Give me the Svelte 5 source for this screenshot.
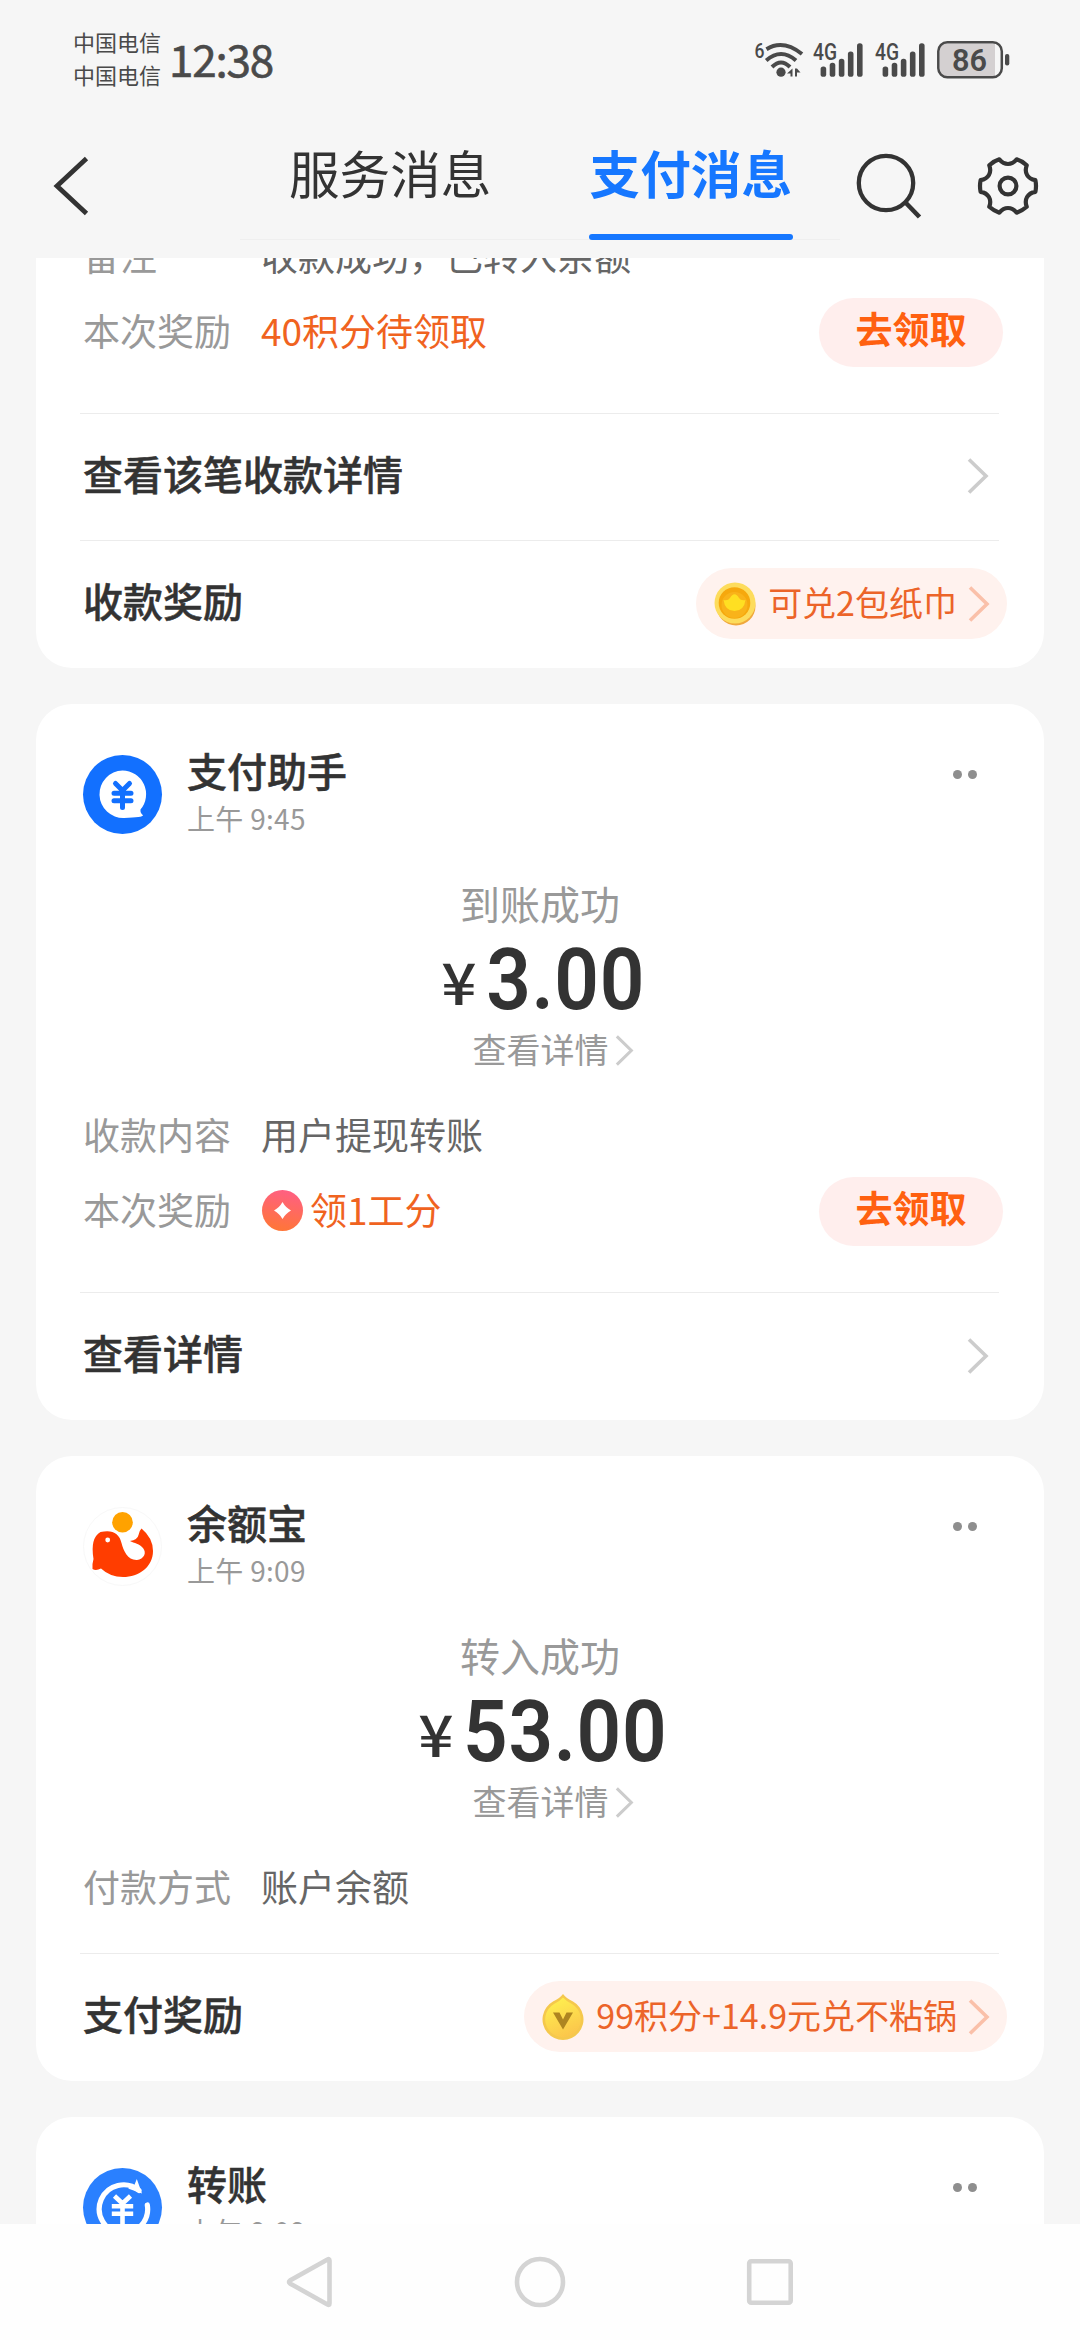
<script>
  const cards = [
    {
      rows: [
        { label: '备注', value: '收款成功，已转入余额' },
        { label: '本次奖励', value: '40积分待领取', reward: true, action: '去领取' }
      ],
      links: [
        { text: '查看该笔收款详情' },
        { text: '收款奖励', pill: '可兑2包纸巾', icon: 'coin' }
      ]
    },
    {
      avatar: 'assistant',
      name: '支付助手',
      time: '上午 9:45',
      status: '到账成功',
      amount: '3.00',
      rows: [
        { label: '收款内容', value: '用户提现转账' },
        { label: '本次奖励', value: '领1工分', reward: true, icon: true, action: '去领取' }
      ],
      links: [{ text: '查看详情' }]
    },
    {
      avatar: 'whale',
      name: '余额宝',
      time: '上午 9:09',
      status: '转入成功',
      amount: '53.00',
      rows: [{ label: '付款方式', value: '账户余额' }],
      links: [{ text: '支付奖励', pill: '99积分+14.9元兑不粘锅', icon: 'drop' }]
    },
    { avatar: 'transfer', name: '转账', time: '上午 9:09', rows: [], links: [] }
  ];

  const bars = [10.3, 14, 18, 25.3, 33.6];

  // Six rounded teeth joined by concave notches.
  function gearPath(c, outer, inner) {
    const pt = (deg, r) => {
      const a = (deg * Math.PI) / 180;
      return `${(c + r * Math.cos(a)).toFixed(2)} ${(c + r * Math.sin(a)).toFixed(2)}`;
    };
    let d = `M${pt(-12, outer)}`;
    for (let k = 0; k < 6; k++) {
      const base = k * 60;
      d += `A${outer} ${outer} 0 0 1 ${pt(base + 12, outer)}`;
      d += `C${pt(base + 20, inner)} ${pt(base + 40, inner)} ${pt(base + 48, outer)}`;
    }
    return d + 'Z';
  }
  const gear = gearPath(32, 28, 20.8);
</script>

{#snippet chevron(cls)}
  <svg class={cls} viewBox="0 0 20 36" preserveAspectRatio="none">
    <path d="M1 1.5 L18 18 L1 34.5" fill="none" stroke="currentColor" stroke-width="3.6" />
  </svg>
{/snippet}

{#snippet signal()}
  <svg class="signal" viewBox="0 0 50 38">
    <text x="0" y="19" font-size="23" textLength="24" lengthAdjust="spacingAndGlyphs">4G</text>
    {#each bars as h, i}
      <rect x={7.6 + i * 9.1} y={35.8 - h} width="5.6" height={h} rx="2.6" />
    {/each}
  </svg>
{/snippet}

<div class="screen">
  <div class="status">
    <div class="carrier"><span>中国电信</span><span>中国电信</span></div>
    <div class="clock">12:38</div>
    <div class="icons">
      <svg class="wifi" viewBox="0 0 50 38">
        <text x="0.5" y="16.5" font-size="21" textLength="10" lengthAdjust="spacingAndGlyphs">6</text>
        <g fill="none" stroke="#4a4a4a" stroke-width="4">
          <path d="M12.5 8.2 Q29 -2 48 13" />
          <path d="M12.2 19.5 Q27 6.500 42 19.500" />
          <path d="M18 26 Q27 17 36 26" />
        </g>
        <circle cx="27" cy="31.2" r="4.6" />
        <path d="M38.5 27.500V35.500H36.500V32.500H33ZM41 27.500H43L46.500 31.500H43V35.500H41Z" />
      </svg>
      {@render signal()}
      {@render signal()}
      <svg class="battery" viewBox="0 0 74 38">
        <path d="M9 2.5H58V35.5H9Q2.500 35.5 2.500 28V10Q2.500 2.500 9 2.500Z" fill="#d4d0d1" />
        <rect x="1.300" y="1.300" width="63.500" height="35" rx="9" fill="none" stroke="#4a4a4a" stroke-width="2.500" />
        <rect x="68" y="13" width="4.300" height="11.500" rx="2" />
        <text x="15" y="30" font-size="31" font-weight="600" textLength="35" lengthAdjust="spacingAndGlyphs">86</text>
      </svg>
    </div>
  </div>

  <header>
    <svg class="back" viewBox="0 0 36 58">
      <path d="M33.500 1.500 L4 29 L33.500 56.500" fill="none" stroke="#333" stroke-width="4.800" />
    </svg>
    <nav class="tabs">
      <span class="tab">服务消息</span>
      <span class="tab active">支付消息</span>
    </nav>
    <svg class="search" viewBox="0 0 66 70">
      <circle cx="31" cy="31" r="27.200" fill="none" stroke="#333" stroke-width="4.300" />
      <path d="M50.500 50.500 L64.500 65" stroke="#333" stroke-width="4.600" />
    </svg>
    <svg class="gear" viewBox="0 0 64 64">
      <path d={gear} fill="none" stroke="#333" stroke-width="4.200" stroke-linejoin="round" />
      <circle cx="32" cy="32" r="8.400" fill="none" stroke="#333" stroke-width="4.200" />
    </svg>
  </header>

  <main>
    {#each cards as card}
      <section class="card" class:partial={!card.name}>
        {#if card.name}
          <div class="head">
            {#if card.avatar === 'assistant'}
              <svg class="avatar" viewBox="0 0 79 79">
                <circle cx="39.500" cy="39.500" r="39.500" fill="#1270ff" />
                <path d="M39.500 15.500A23.700 23.700 0 0 1 57.500 54.500Q57 58 60 60.300Q60 62.500 41 63A23.700 23.700 0 1 1 39.500 15.500Z" fill="#fff" />
                <path d="M32.500 28.500 L39.500 35.500 L46.500 28.500M39.500 36V52.500M31 38.300H48M31 45.800H48" fill="none" stroke="#1270ff" stroke-width="5" stroke-linecap="round" />
              </svg>
            {:else if card.avatar === 'whale'}
              <svg class="avatar" viewBox="0 0 79 79">
                <circle cx="39.500" cy="39.500" r="39" fill="#fff" stroke="#f8f8f8" />
                <circle cx="39.500" cy="15.300" r="10.300" fill="#ffa200" />
                <path d="M17.500 25Q35 21 38.500 36C40.500 44 45 53.500 54 53C61 52 64 46 60 41C57 37 51 36 47 34Q54.500 33 55.500 28Q56 24 58.500 21.500Q70 31 70 44C70 60 56 70 40 70Q27 70 18 61.500Q13 64 9.500 62Q9 57 10.500 52Q7 31 17.500 25Z" fill="#ff3d00" />
                <circle cx="24.700" cy="33" r="2.400" fill="#fff" />
              </svg>
            {:else}
              <svg class="avatar" viewBox="0 0 79 79">
                <circle cx="39.500" cy="39.500" r="39.500" fill="#2a80ff" />
                <path d="M56 22.500A24.200 24.200 0 1 0 64.300 37" fill="none" stroke="#fff" stroke-width="5.200" stroke-linecap="round" />
                <path d="M53.800 11L59 25.500L45 20.500L51 18Z" fill="#fff" />
                <path d="M31.500 28 L39.500 35.500 L47.500 28M39.500 35V57M28.800 38.300H50.200M28.800 45.800H50.200" fill="none" stroke="#fff" stroke-width="4.600" />
              </svg>
            {/if}
            <div class="who">
              <div class="name">{card.name}</div>
              <div class="time">{card.time}</div>
            </div>
            <div class="dots"><i></i><i></i></div>
          </div>
        {/if}

        {#if card.amount}
          <div class="summary">
            <div class="state">{card.status}</div>
            <div class="amount"><span class="yen">¥</span><span class="num">{card.amount}</span></div>
            <div class="detail"><span>查看详情</span>{@render chevron('chev small')}</div>
          </div>
        {/if}

        {#if card.rows.length}
          <div class="rows" class:roomy={card.rows.length > 1}>
            {#each card.rows as row}
              <div class="row">
                <span class="label">{row.label}</span>
                {#if row.icon}
                  <svg class="gem" viewBox="0 0 41 41">
                    <defs>
                      <linearGradient id="gem" x1="0.600" y1="0" x2="0.400" y2="1">
                        <stop offset="0" stop-color="#ff5f83" />
                        <stop offset="1" stop-color="#ff7636" />
                      </linearGradient>
                    </defs>
                    <circle cx="20.500" cy="20.500" r="20.500" fill="url(#gem)" />
                    <path d="M20.500 12Q23.500 17.500 29 20.500Q23.500 23.500 20.500 29Q17.500 23.500 12 20.500Q17.500 17.500 20.500 12Z" fill="#fff" />
                  </svg>
                {/if}
                <span class="value" class:reward={row.reward}>{row.value}</span>
                {#if row.action}<span class="action"><b>{row.action}</b></span>{/if}
              </div>
            {/each}
          </div>
        {/if}

        {#each card.links as link}
          <div class="link">
            <span class="link-text">{link.text}</span>
            {#if link.pill}
              <div class="pill">
                {#if link.icon === 'coin'}
                  <svg class="badge" viewBox="0 0 42 46">
                    <circle cx="22" cy="25" r="19.500" fill="#f0a83c" />
                    <circle cx="21" cy="22" r="20.500" fill="#fddc5c" />
                    <circle cx="20.500" cy="22" r="15.800" fill="#f6a80d" />
                    <circle cx="20.500" cy="24" r="13" fill="#f9b31a" />
                    <path d="M9.500 19Q14 20 16 17Q20.500 9.500 25 17Q27 20 31.500 19Q30 30 20.500 30Q11 30 9.500 19Z" fill="#ffdf22" />
                  </svg>
                {:else}
                  <svg class="badge" viewBox="0 0 42 46">
                    <defs>
                      <linearGradient id="drop" x1="0.300" y1="0" x2="0.700" y2="1">
                        <stop offset="0" stop-color="#fff04f" />
                        <stop offset="1" stop-color="#fbc44b" />
                      </linearGradient>
                    </defs>
                    <path d="M21 0Q24 4 31 7.500A20.500 20.500 0 1 1 11 7.500Q18 4 21 0Z" fill="#f5c84c" />
                    <path d="M21 3.500Q24 7 30 10A17.800 17.800 0 1 1 12 10Q18 7 21 3.500Z" fill="url(#drop)" />
                    <path d="M11 18.500H17.500L21 25.500L24.500 18.500H31L21 35.500Z" fill="#ae8521" />
                  </svg>
                {/if}
                <span class="pill-text">{link.pill}</span>
                {@render chevron('chev warm')}
              </div>
            {:else}
              {@render chevron('chev plain')}
            {/if}
          </div>
        {/each}
      </section>
    {/each}
  </main>

  <footer>
    <svg viewBox="0 0 52 52"><path d="M45.500 4.500V47.500Q45.500 49.500 43.500 48.500L6 27.500Q4 26 6 24.500L43.500 3.500Q45.500 2.500 45.500 4.500Z" /></svg>
    <svg viewBox="0 0 52 52"><circle cx="26" cy="26" r="23" /></svg>
    <svg viewBox="0 0 52 52"><rect x="5.200" y="5.200" width="41.500" height="41.500" rx="2" /></svg>
  </footer>
</div>

<style>
  :global(body) { background: #f6f6f6; }
  .screen {
    width: 1080px;
    height: 2340px;
    display: flex;
    flex-direction: column;
    overflow: hidden;
    background: #f6f6f6;
    color: #333;
    font-family: "Noto Sans CJK SC", "Noto Sans", sans-serif;
  }
  svg { display: block; flex: none; overflow: visible; }

  .status {
    height: 118px;
    flex: none;
    display: flex;
    align-items: center;
    padding: 0 69px 0 73px;
    box-sizing: border-box;
    color: #4a4a4a;
  }
  .carrier { display: flex; flex-direction: column; font-size: 22px; line-height: 33px; padding-bottom: 3px; }
  .clock { margin-left: 8px; font-size: 44px; line-height: 60px; letter-spacing: -1.200px; padding-bottom: 3px; -webkit-text-stroke: 0.600px currentColor; }
  .icons { margin-left: auto; padding-top: 1px; display: flex; fill: #4a4a4a; font-family: Roboto, sans-serif; font-weight: 500; }
  .wifi { width: 50px; height: 38px; margin-right: 9px; }
  .signal { width: 50px; height: 38px; margin-right: 12px; }
  .battery { width: 74px; height: 38px; }

  header { height: 140px; flex: none; display: flex; padding: 0 40px 0 53px; box-sizing: border-box; }
  .back { width: 36px; height: 58px; margin-top: 39px; }
  .tabs {
    height: 122px;
    width: 600px;
    margin-left: 151px;
    padding: 0 47px 0 48px;
    display: flex;
    justify-content: space-between;
    box-sizing: border-box;
    border-bottom: 1px solid #efefef;
  }
  .tab { height: 122px; padding: 0 1px; box-sizing: border-box; font-size: 50.600px; line-height: 108px; }
  .active { color: #1677ff; font-weight: 700; display: flex; flex-direction: column; }
  .active::after { content: ""; flex: none; height: 6px; margin: 8px -1px 0; border-radius: 3px; background: #1677ff; }
  .search { width: 66px; height: 70px; margin: 34px 0 0 15px; }
  .gear { width: 64px; height: 64px; margin: 36px 0 0 auto; }

  main { flex: 1; min-height: 0; overflow: hidden; display: flex; flex-direction: column; gap: 36px; padding: 0 36px; }
  .card { flex: none; background: #fff; border-radius: 36px; padding: 51px 0 0; min-height: 120px; }
  .partial { margin-top: -38px; padding-top: 0; }

  .head { display: flex; height: 79px; padding: 0 67px 0 47px; }
  .avatar { width: 79px; height: 79px; }
  .who { margin-left: 25px; }
  .name { font-size: 40px; line-height: 42px; font-weight: 500; margin-top: -6px; -webkit-text-stroke: 0.500px currentColor; }
  .time { font-size: 28px; line-height: 40px; margin-top: 7px; letter-spacing: 0.300px; color: #999; }
  .dots { margin: 15px 0 0 auto; display: flex; gap: 6px; }
  .dots i { width: 9.200px; height: 9.200px; border-radius: 50%; background: #8e8e8e; }

  .summary { margin-top: 41px; height: 224px; display: flex; flex-direction: column; align-items: center; }
  .state { font-size: 40px; line-height: 56px; height: 60px; color: #999; }
  .amount { height: 90px; margin-left: 8px; display: flex; align-items: flex-end; transform: scaleX(0.920); }
  .yen { font-size: 58px; line-height: 70px; font-weight: 500; margin: 0 13px 10px 0; transform: scaleX(1.160); }
  .num { font-family: Roboto, sans-serif; font-weight: 600; font-size: 85px; line-height: 90px; letter-spacing: 0.700px; }
  .detail { display: flex; align-items: center; height: 50px; margin-left: 25px; font-size: 34px; line-height: 46px; color: #999; gap: 7px; }
  .detail span { padding-bottom: 3px; }

  .rows { padding: 0 41px 27px 47px; }
  .roomy { padding-bottom: 43px; }
  .row { height: 75px; display: flex; align-items: center; font-size: 37px; line-height: 50px; }
  .label { width: 178px; color: #999; padding-bottom: 5px; }
  .value { color: #666; padding-bottom: 5px; }
  .gem { width: 41px; height: 41px; margin: 0 7px 3px 1px; }
  .reward { color: #f0631f; }
  .action {
    width: 184px;
    height: 69px;
    margin-left: auto;
    display: flex;
    justify-content: center;
    border-radius: 35px;
    background: #ffeeed;
    color: #ff6010;
    line-height: 60px;
  }

  .link {
    height: 127px;
    box-sizing: border-box;
    border-top: 1px solid #ececec;
    margin: 0 45px 0 44px;
    padding-bottom: 2px;
    display: flex;
    align-items: center;
    justify-content: space-between;
  }
  .link:last-child { height: 128px; }
  .link-text { font-size: 40px; line-height: 56px; font-weight: 500; margin-left: 3px; padding-bottom: 7px; -webkit-text-stroke: 0.500px currentColor; }
  .pill {
    height: 71px;
    margin-right: -8px;
    padding: 0 18px;
    display: flex;
    align-items: center;
    border-radius: 36px;
    background: #fff2ee;
    color: #ec6429;
  }
  .badge { width: 42px; height: 46px; margin-right: 12px; }
  .pill-text { font-size: 34px; line-height: 48px; padding-bottom: 4px; margin-right: 12px; }
  .chev { width: 20px; height: 36px; }
  .plain { color: #ccc; margin-right: 11px; }
  .warm { color: #fac0a9; }
  .small { width: 17px; height: 31px; color: #ccc; }

  footer { height: 116px; flex: none; background: #fefefe; display: flex; justify-content: center; align-items: center; gap: 178px; }
  footer svg { width: 52px; height: 52px; fill: none; stroke: #d4d4d4; stroke-width: 4.600; }
</style>
